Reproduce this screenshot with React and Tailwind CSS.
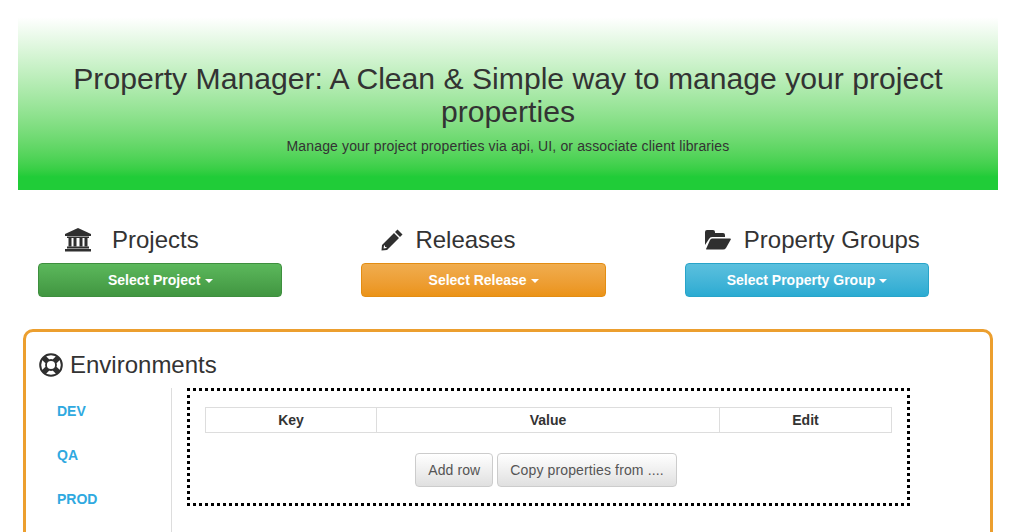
import React from "react";

const BankIcon = () => (
  <svg viewBox="0 0 26 24" className="w-[26px] h-[24px] fill-[#2f2f2f]">
    <path d="M13 0 L26 6 V8 H0 V6 Z" />
    <rect x="2" y="8.5" width="22" height="1.5" />
    <rect x="3.5" y="10" width="3" height="8.5" />
    <rect x="8.5" y="10" width="3" height="8.5" />
    <rect x="14.5" y="10" width="3" height="8.5" />
    <rect x="19.5" y="10" width="3" height="8.5" />
    <rect x="2" y="18.5" width="22" height="2" />
    <rect x="0" y="21" width="26" height="2.5" />
  </svg>
);

const PencilIcon = () => (
  <svg viewBox="0 0 22 22" className="w-[22px] h-[22px] fill-[#2f2f2f]">
    <path d="M16.5 0.5 L21.5 5.5 L19 8 L14 3 Z" />
    <path fillRule="evenodd" d="M13 4 L18 9 L6 21 L0.5 21.5 L1 16 Z M3 16.5 L2.6 19.4 L5.5 19 L5.5 18 L4 18 L4 16.5 Z" />
  </svg>
);

const FolderIcon = () => (
  <svg viewBox="0 0 26 20" className="w-[26px] h-[20px] fill-[#2f2f2f]">
    <path d="M0 2 Q0 0 2 0 H8 Q10 0 10 2 V3 H18 Q20 3 20 5 V7 H7 Q5 7 4 9 L0 15 Z" />
    <path d="M7 8.5 H25 Q26.5 8.5 25.5 10 L21 18 Q20 19.5 18 19.5 H2 Q0.5 19.5 1.5 18 L5 10 Q5.8 8.5 7 8.5 Z" />
  </svg>
);

const RingIcon = () => (
  <svg viewBox="0 0 24 24" className="w-[24px] h-[24px]">
    <circle cx="12" cy="12" r="10.8" fill="#ffffff" stroke="#2f2f2f" strokeWidth="2" />
    <path d="M4.6 4.6 L8.4 8.4 M19.4 4.6 L15.6 8.4 M4.6 19.4 L8.4 15.6 M19.4 19.4 L15.6 15.6" stroke="#2f2f2f" strokeWidth="5.5" />
    <circle cx="12" cy="12" r="5" fill="#ffffff" stroke="#2f2f2f" strokeWidth="1.8" />
  </svg>
);

const Caret = () => (
  <span className="inline-block ml-[4px] align-middle w-0 h-0 border-x-[4px] border-x-transparent border-t-[4px] border-t-white" />
);

const picker = [
  { title: "Projects", icon: <BankIcon />, label: "Select Project", head: "pl-[27px] gap-[21px]", btn: "from-[#5cb85c] to-[#419641] border-[#3e8f3e]" },
  { title: "Releases", icon: <PencilIcon />, label: "Select Release", head: "pl-[20px] gap-[12px]", btn: "from-[#f0ad4e] to-[#eb9316] border-[#e38d13]" },
  { title: "Property Groups", icon: <FolderIcon />, label: "Select Property Group", head: "pl-[20px] gap-[13px]", btn: "from-[#5bc0de] to-[#2aabd2] border-[#28a4c9]" },
];

const App = () => {
  return (
    <div className="h-[532px] overflow-hidden bg-white font-['Liberation_Sans',Arial,sans-serif] text-[#333]">
      <div className="ml-[18px] w-[980px] h-[190px] pt-[62px] bg-gradient-to-b from-white from-[9%] to-[#20cc38] to-[93%] text-center">
        <h1 className="text-[30.15px] leading-[33px] px-[50px]">
          Property Manager: A Clean &amp; Simple way to manage your project properties
        </h1>
        <p className="mt-[8px] text-sm leading-5 tracking-[0.14px]">Manage your project properties via api, UI, or associate client libraries</p>
      </div>

      <div className="flex gap-[79px] pl-[38px] mt-[34px]">
        {picker.map((p) => (
          <div key={p.title} className="w-[244.4px]">
            <div className={`flex items-center h-[32px] ${p.head}`}>
              {p.icon}
              <h3 className="text-2xl leading-[32px] whitespace-nowrap">{p.title}</h3>
            </div>
            <button className={`mt-[7px] w-full h-[34px] rounded border bg-gradient-to-b text-white text-sm font-bold ${p.btn}`}>
              {p.label}
              <Caret />
            </button>
          </div>
        ))}
      </div>

      <div className="ml-[23px] mt-[32px] w-[970px] h-[300px] border-[3px] border-[#ec9f2f] rounded-[10px] pl-[13px] pt-[17px]">
        <div className="flex items-center gap-[7px] h-[32px]">
          <RingIcon />
          <h3 className="text-2xl leading-[32px]">Environments</h3>
        </div>
        <div className="flex mt-[7px]">
          <div className="w-[133px] h-[200px] border-r border-[#ddd] pl-[18px] pt-[13px] flex flex-col gap-[24px] text-sm leading-5 font-bold text-[#2fa9e0]">
            <a href="#">DEV</a>
            <a href="#">QA</a>
            <a href="#">PROD</a>
          </div>
          <div className="ml-[15px] w-[723px] h-[118px] border-[3px] border-dotted border-black pt-[16px] px-[15px]">
            <table className="w-[687px] table-fixed border-collapse border border-[#ddd] text-sm font-bold">
              <thead>
                <tr className="h-[25px]">
                  <th className="w-[171px] border border-[#ddd]">Key</th>
                  <th className="w-[343px] border border-[#ddd]">Value</th>
                  <th className="border border-[#ddd]">Edit</th>
                </tr>
              </thead>
            </table>
            <div className="flex justify-center gap-[4px] mt-[20px] pr-[5px]">
              <button className="h-[34px] px-[12px] rounded border border-[#ccc] bg-gradient-to-b from-white to-[#e0e0e0] text-sm text-[#555] tracking-[0.1px]">Add row</button>
              <button className="h-[34px] px-[12px] rounded border border-[#ccc] bg-gradient-to-b from-white to-[#e0e0e0] text-sm text-[#555] tracking-[0.13px]">Copy properties from ....</button>
            </div>
          </div>
        </div>
      </div>
    </div>
  );
};

export default App;
